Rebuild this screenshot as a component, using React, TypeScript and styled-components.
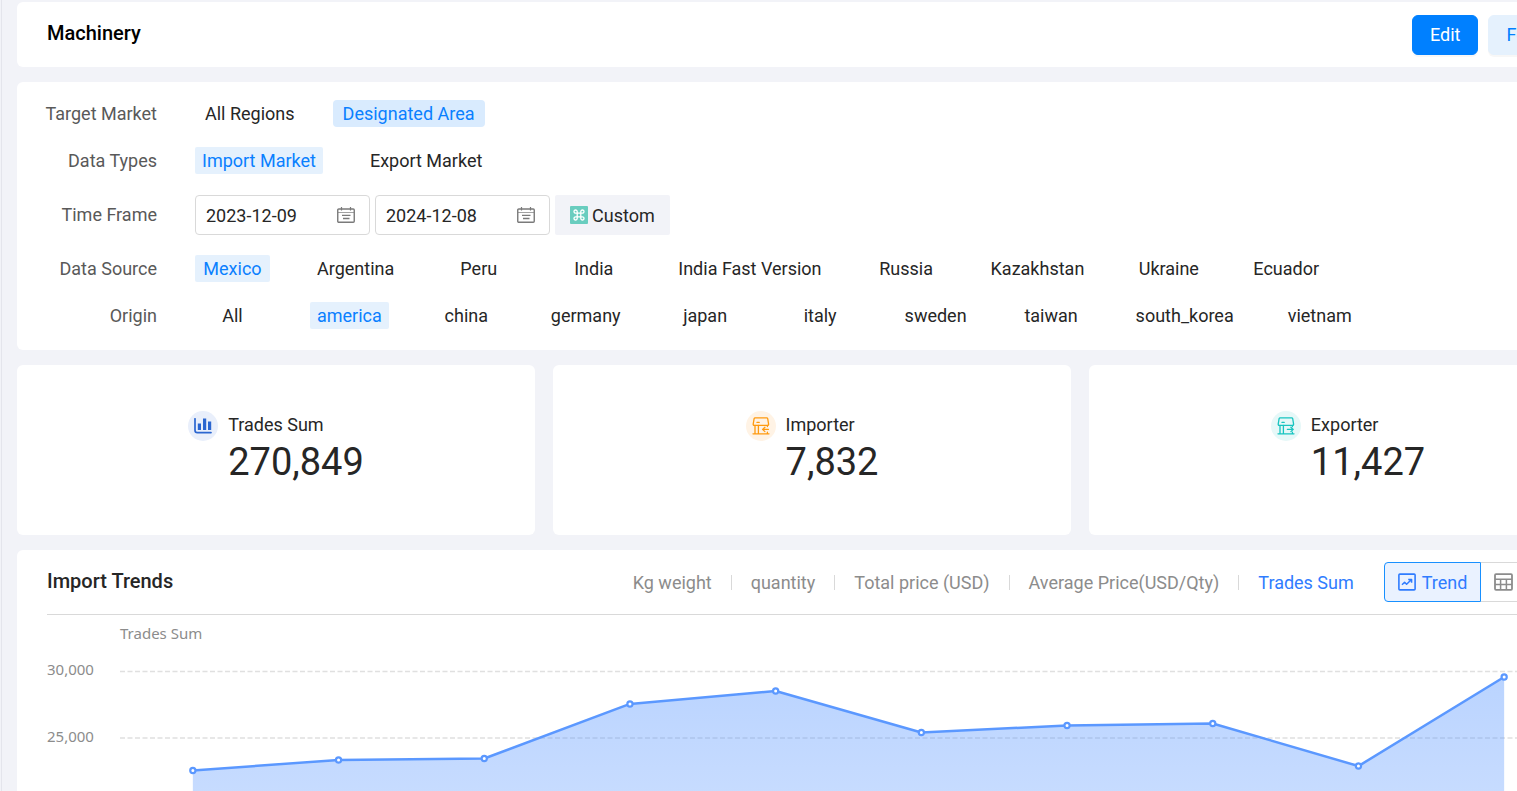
import React, { useLayoutEffect, useRef, useState } from "react";
import styled, { createGlobalStyle, css } from "styled-components";

const GlobalStyle = createGlobalStyle`
  *, *::before, *::after { box-sizing: border-box; }
  body {
    margin: 0;
    background: #f2f3f8;
    color: #262626;
    font-family: Roboto, "Liberation Sans", sans-serif;
    font-size: 18px;
    line-height: 27px;
  }
  button, input { font: inherit; color: inherit; }
  button { cursor: pointer; }
  h1, h2, p, dl, dd, dt { margin: 0; }
`;

const Page = styled.div`
  display: flex;
  height: 100vh;
  margin-left: 1px;
  overflow: hidden;
  border-left: 1px solid #e4e5ec;
  padding: 2px 0 0 15px;
`;

const Main = styled.main`
  display: flex;
  flex-direction: column;
  flex: 1 0 auto;
  gap: 15px;
  min-width: 1590px;
`;

const Panel = styled.section`
  background: #fff;
  border-radius: 6px;
`;

const TitleBar = styled(Panel)`
  display: flex;
  align-items: center;
  justify-content: space-between;
  height: 65px;
  padding: 0 30px;
`;

const Title = styled.h1`
  padding-bottom: 2px;
  font-size: 20px;
  font-weight: 500;
  color: #000;
`;

const Actions = styled.div`
  display: flex;
  gap: 10px;
`;

const ActionButton = styled.button<{ $primary?: boolean }>`
  height: 40px;
  padding: 0 17px;
  border: 1px solid ${(p) => (p.$primary ? "#0080ff" : "#e5f1fd")};
  border-radius: 6px;
  background: ${(p) => (p.$primary ? "#0080ff" : "#e5f1fd")};
  color: ${(p) => (p.$primary ? "#fff" : "#0080ff")};
  box-shadow: 0 2px 0 rgba(0, 0, 0, 0.03);
`;

const Filters = styled(Panel)`
  display: flex;
  flex-direction: column;
  gap: 20px;
  padding: 18px 28px 21px;
`;

const FilterRow = styled.div`
  display: flex;
  align-items: center;
  gap: 38px;
`;

const FilterLabel = styled.span`
  width: 112px;
  text-align: right;
  color: #595959;
`;

const Options = styled.div<{ $gap: number }>`
  display: flex;
  align-items: center;
  gap: ${(p) => p.$gap}px;
`;

const DateRange = styled(Options)`
  padding-top: 1px;
`;

const Option = styled.button<{ $active?: boolean; $wide?: boolean }>`
  min-width: 75px;
  height: 27px;
  padding: 0 ${(p) => (p.$wide ? 10 : 7)}px;
  border: 0;
  border-radius: ${(p) => (p.$wide ? 4 : 2)}px;
  background: none;
  line-height: 27px;
  ${(p) =>
    p.$active &&
    css`
      background: ${p.$wide ? "#d9ebfe" : "#e5f1fd"};
      color: #0a80ff;
    `}
`;

const DateField = styled.label`
  display: flex;
  align-items: center;
  width: 175px;
  height: 40px;
  padding: 0 14px 0 10px;
  border: 1px solid #d9d9d9;
  border-radius: 4px;
  color: #7a7a7a;
`;

const DateInput = styled.input`
  flex: 1;
  min-width: 0;
  padding: 0;
  border: 0;
  outline: 0;
  background: none;
  color: #262626;
`;

const CustomButton = styled.button`
  display: flex;
  align-items: center;
  gap: 4px;
  height: 40px;
  padding: 0 15px;
  border: 0;
  border-radius: 2px;
  background: #f2f3f8;
`;

const Stats = styled.div`
  display: grid;
  grid-template-columns: repeat(3, 1fr);
  gap: 18px;
`;

const StatCard = styled(Panel)`
  display: flex;
  align-items: center;
  justify-content: center;
  height: 170px;
  padding-bottom: 6px;
`;

const StatBody = styled.dl`
  display: grid;
  grid-template-columns: 30px auto;
  column-gap: 10px;
`;

const StatIcon = styled.span<{ $bg: string; $color: string }>`
  display: flex;
  align-items: center;
  justify-content: center;
  width: 30px;
  height: 30px;
  border-radius: 50%;
  background: ${(p) => p.$bg};
  color: ${(p) => p.$color};
`;

const StatName = styled.dt``;

const StatValue = styled.dd`
  grid-column: 2;
  font-size: 38px;
  line-height: 42px;
`;

const TrendPanel = styled(Panel)`
  display: flex;
  flex: 1 0 0;
  flex-direction: column;
  min-height: 0;
  padding: 0 30px;
  border-radius: 6px 6px 0 0;
`;

const TrendHeader = styled.header`
  display: flex;
  flex: none;
  align-items: center;
  justify-content: space-between;
  height: 65px;
  border-bottom: 1px solid #d9d9d9;
`;

const SectionTitle = styled.h2`
  padding-bottom: 2px;
  font-size: 20px;
  font-weight: 500;
`;

const TrendControls = styled.div`
  display: flex;
  align-items: center;
  gap: 30px;
`;

const Metrics = styled.div`
  display: flex;
  align-items: center;
  gap: 19px;
`;

const Metric = styled.button<{ $active?: boolean }>`
  padding: 0;
  border: 0;
  background: none;
  color: ${(p) => (p.$active ? "#2f7cff" : "#8c8c8c")};
`;

const Divider = styled.span`
  width: 1px;
  height: 15px;
  background: #d9d9d9;
`;

const ViewSwitch = styled.div`
  display: flex;
`;

const ViewButton = styled.button<{ $active?: boolean }>`
  display: flex;
  align-items: center;
  gap: 6px;
  height: 40px;
  padding: 0 13px;
  border: 1px solid ${(p) => (p.$active ? "#1890ff" : "#d9d9d9")};
  border-left-width: ${(p) => (p.$active ? 1 : 0)}px;
  border-radius: ${(p) => (p.$active ? "4px 0 0 4px" : "0 4px 4px 0")};
  background: ${(p) => (p.$active ? "#eaf2ff" : "#fff")};
  color: ${(p) => (p.$active ? "#2f7cff" : "#8c8c8c")};
`;

const ChartArea = styled.div`
  flex: 1;
  min-height: 0;
  overflow: hidden;

  svg { display: block; }
  text {
    fill: #8c8c8c;
    font-family: "Noto Sans", sans-serif;
    font-size: 15px;
  }
`;

const CalendarIcon = () => (
  <svg width="18" height="16" viewBox="0 0 18 16" fill="none" stroke="currentColor" aria-hidden="true">
    <rect x="0.75" y="2" width="16.5" height="13.2" rx="1" strokeWidth="1.4" />
    <path d="M1 5.5h16" strokeWidth="1" opacity="0.7" />
    <path d="M4.5 0v3.6M13.5 0v3.6" strokeWidth="1.2" />
    <path d="M5 8.4h8.5M6 11.5h6.5" strokeWidth="1.3" />
  </svg>
);

const CommandIcon = () => (
  <svg width="18" height="18" viewBox="0 0 18 18" aria-hidden="true">
    <rect width="18" height="18" rx="1" fill="#69cdbf" />
    <path
      d="M7.2 7.2h3.6v3.6H7.2zM7.2 7.2H5.7a1.6 1.6 0 1 1 1.5-1.6zM10.8 7.2V5.6a1.6 1.6 0 1 1 1.5 1.6zM10.8 10.8h1.5a1.6 1.6 0 1 1-1.5 1.6zM7.2 10.8v1.6a1.6 1.6 0 1 1-1.5-1.6z"
      fill="none"
      stroke="#fff"
      strokeWidth="1.3"
    />
  </svg>
);

const BarsIcon = () => (
  <svg width="18" height="16" viewBox="0 0 18 16" aria-hidden="true">
    <path d="M1 0.8v11.4a2.4 2.4 0 0 0 2.4 2.4H17" fill="none" stroke="currentColor" strokeWidth="1.7" strokeLinecap="round" />
    <path d="M3.8 5.5h3.2V12H3.8zM9 0.5h3.2V12H9zM14 3.5h3.2V12H14z" fill="currentColor" />
  </svg>
);

const ShopIcon = ({ out }: { out?: boolean }) => (
  <svg
    width="18"
    height="18"
    viewBox="0 0 18 18"
    fill="none"
    stroke="currentColor"
    strokeWidth="1.3"
    strokeLinecap="round"
    strokeLinejoin="round"
    aria-hidden="true"
  >
    <path d="M3.2 0.8h11.4q0.9 0 1.1 0.9l0.9 5.4q0.1 1.2-1 1.2H2.2q-1.1 0-1-1.2L2.1 1.7q0.2-0.9 1.1-0.9z" />
    <path d="M5 5.4h2.2M3 8.4v8M6.4 8.4v8M15.4 8.4v1.2M15.4 15.2v1.4M1 16.8h16" />
    <path d={out ? "M10.4 12.4h5.8M13.9 10.2l2.3 2.2-2.3 2.2" : "M16.4 12.4h-5.8M12.9 10.2l-2.3 2.2 2.3 2.2"} />
  </svg>
);

const TrendIcon = () => (
  <svg width="18" height="18" viewBox="0 0 18 18" fill="none" stroke="currentColor" strokeWidth="1.6" strokeLinejoin="round" aria-hidden="true">
    <rect x="0.9" y="1.1" width="16.2" height="15.8" rx="1" />
    <path d="M4 11.8l2.6-2.6 2 2 4.6-4.4M10.2 6.4h3.4v3.4" strokeWidth="1.5" />
  </svg>
);

const TableIcon = () => (
  <svg width="19" height="18" viewBox="0 0 19 18" fill="none" stroke="currentColor" strokeWidth="1.8" aria-hidden="true">
    <rect x="1" y="1.2" width="17" height="15.6" rx="1" />
    <path d="M1 6.2h17M1 11.5h17M6.6 6.2v10.6M12.4 6.2v10.6" strokeWidth="1.5" />
  </svg>
);

const filters = [
  { label: "Target Market", wide: true, options: ["All Regions", "Designated Area"], active: "Designated Area" },
  { label: "Data Types", options: ["Import Market", "Export Market"], active: "Import Market" },
  { label: "Time Frame", dates: ["2023-12-09", "2024-12-08"] },
  {
    label: "Data Source",
    options: ["Mexico", "Argentina", "Peru", "India", "India Fast Version", "Russia", "Kazakhstan", "Ukraine", "Ecuador"],
    active: "Mexico",
  },
  {
    label: "Origin",
    options: ["All", "america", "china", "germany", "japan", "italy", "sweden", "taiwan", "south_korea", "vietnam"],
    active: "america",
  },
];

const stats = [
  { name: "Trades Sum", value: "270,849", bg: "#e9effb", color: "#2b66d0", icon: <BarsIcon /> },
  { name: "Importer", value: "7,832", bg: "#fff3e5", color: "#ff9a0f", icon: <ShopIcon /> },
  { name: "Exporter", value: "11,427", bg: "#e6f8f8", color: "#17c4c0", icon: <ShopIcon out /> },
];

const metrics = ["Kg weight", "quantity", "Total price (USD)", "Average Price(USD/Qty)", "Trades Sum"];

const trades = [22560, 23350, 23460, 27560, 28530, 25410, 25940, 26090, 22890, 29590];

const PLOT_LEFT = 73;
const PLOT_TOP = 56.5;
const PLOT_HEIGHT = 399;
const MAX = 30000;
const ticks = [30000, 25000, 20000, 15000, 10000, 5000, 0];

const yOf = (value: number) => PLOT_TOP + (1 - value / MAX) * PLOT_HEIGHT;

function TrendChart() {
  const ref = useRef<HTMLDivElement>(null);
  const [width, setWidth] = useState(1530);

  useLayoutEffect(() => {
    const el = ref.current;
    if (!el) return;
    const measure = () => setWidth(el.clientWidth);
    measure();
    const observer = new ResizeObserver(measure);
    observer.observe(el);
    return () => observer.disconnect();
  }, []);

  const band = (width - PLOT_LEFT) / trades.length;
  const points = trades.map((v, i) => ({ x: PLOT_LEFT + band * (i + 0.5), y: yOf(v) }));
  const line = points.map((p) => `${p.x},${p.y}`).join(" L");
  const base = PLOT_TOP + PLOT_HEIGHT;
  const visibleTicks = ticks.filter((t) => t >= 25000);

  return (
    <ChartArea ref={ref}>
      <svg width={width} height={base + 40} role="img" aria-label="Trades Sum trend">
        <defs>
          <linearGradient id="area" x1="0" y1="0" x2="0" y2="1">
            <stop offset="0" stopColor="#5b98ff" stopOpacity="0.42" />
            <stop offset="1" stopColor="#5b98ff" stopOpacity="0.16" />
          </linearGradient>
        </defs>
        <text x={PLOT_LEFT} y="24">Trades Sum</text>
        {visibleTicks.map((t) => (
          <g key={t}>
            <text x="0" y={yOf(t) + 3.5}>{t.toLocaleString("en-US")}</text>
            <path d={`M${PLOT_LEFT} ${yOf(t)}H${width}`} stroke="#e0e0e0" strokeWidth="1.5" strokeDasharray="5 2.5" />
          </g>
        ))}
        <path d={`M${line} L${points[points.length - 1].x},${base} L${points[0].x},${base}Z`} fill="url(#area)" />
        <path d={`M${line}`} fill="none" stroke="#5b98ff" strokeWidth="2.5" strokeLinejoin="round" />
        {points.map((p) => (
          <circle key={p.x} cx={p.x} cy={p.y} r="2.6" fill="#fff" stroke="#5b98ff" strokeWidth="2.2" />
        ))}
      </svg>
    </ChartArea>
  );
}

export default function App() {
  return (
    <>
      <GlobalStyle />
      <Page>
        <Main>
          <TitleBar as="header">
            <Title>Machinery</Title>
            <Actions>
              <ActionButton $primary>Edit</ActionButton>
              <ActionButton>Follow</ActionButton>
            </Actions>
          </TitleBar>

          <Filters>
            {filters.map((f) => (
              <FilterRow key={f.label} role="group" aria-label={f.label}>
                <FilterLabel>{f.label}</FilterLabel>
                {f.dates ? (
                  <DateRange $gap={5}>
                    {f.dates.map((d, i) => (
                      <DateField key={d}>
                        <DateInput type="text" defaultValue={d} aria-label={i ? "End date" : "Start date"} />
                        <CalendarIcon />
                      </DateField>
                    ))}
                    <CustomButton>
                      <CommandIcon />
                      Custom
                    </CustomButton>
                  </DateRange>
                ) : (
                  <Options $gap={f.wide ? 28 : 40}>
                    {f.options?.map((o) => (
                      <Option key={o} $wide={f.wide} $active={o === f.active} aria-pressed={o === f.active}>
                        {o}
                      </Option>
                    ))}
                  </Options>
                )}
              </FilterRow>
            ))}
          </Filters>

          <Stats>
            {stats.map((s) => (
              <StatCard key={s.name}>
                <StatBody>
                  <StatIcon $bg={s.bg} $color={s.color}>{s.icon}</StatIcon>
                  <StatName>{s.name}</StatName>
                  <StatValue>{s.value}</StatValue>
                </StatBody>
              </StatCard>
            ))}
          </Stats>

          <TrendPanel>
            <TrendHeader>
              <SectionTitle>Import Trends</SectionTitle>
              <TrendControls>
                <Metrics>
                  {metrics.map((m, i) => (
                    <React.Fragment key={m}>
                      {i > 0 && <Divider />}
                      <Metric $active={m === "Trades Sum"}>{m}</Metric>
                    </React.Fragment>
                  ))}
                </Metrics>
                <ViewSwitch>
                  <ViewButton $active>
                    <TrendIcon />
                    Trend
                  </ViewButton>
                  <ViewButton>
                    <TableIcon />
                    Table
                  </ViewButton>
                </ViewSwitch>
              </TrendControls>
            </TrendHeader>
            <TrendChart />
          </TrendPanel>
        </Main>
      </Page>
    </>
  );
}
